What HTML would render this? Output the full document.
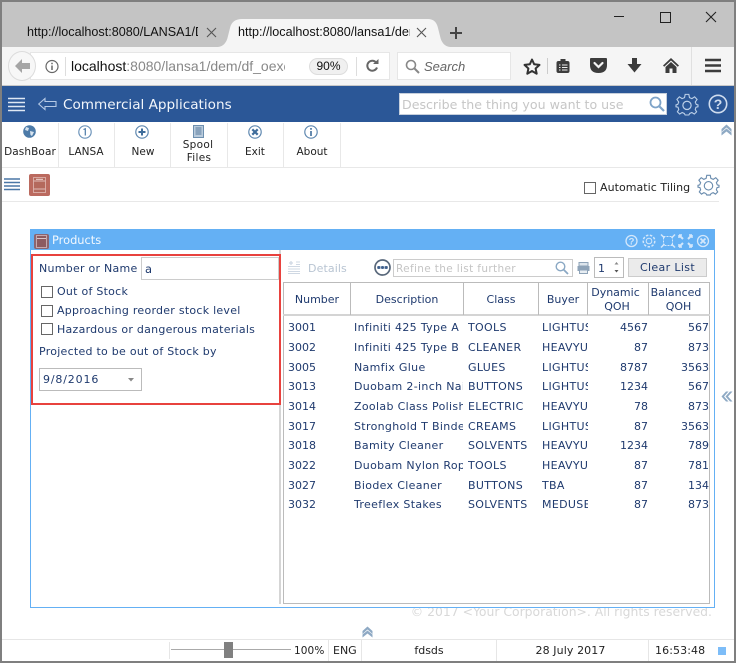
<!DOCTYPE html>
<html><head><meta charset="utf-8"><style>
*{box-sizing:border-box}
html,body{margin:0;padding:0;background:#fff}
body{width:736px;height:663px;position:relative;overflow:hidden;font-family:"DejaVu Sans","Liberation Sans",sans-serif;font-size:11px;color:#1f3a6e}
.a{position:absolute}
.t{position:absolute;white-space:nowrap;line-height:14px}
.c{text-align:center}
.r{text-align:right}
.ff{font-family:"Liberation Sans",sans-serif}
.cb{position:absolute;width:12px;height:12px;border:1px solid #666;background:#fff}
.cell{position:absolute;white-space:nowrap;overflow:hidden;line-height:14px;height:14px;margin-top:1px;letter-spacing:.33px}
.n{letter-spacing:0}
.l{letter-spacing:.26px}
svg{position:absolute;overflow:visible}
</style></head><body>
<!-- browser chrome -->
<div class="a" style="left:0;top:0;width:736px;height:47px;background:#c4c4c4"></div>
<div class="a" style="left:0;top:47px;width:736px;height:39px;background:#f5f5f5"></div>
<div class="a" style="left:0;top:85px;width:736px;height:1px;background:#c8c8c8"></div>
<svg style="left:0;top:0" width="736" height="50"><path d="M218 47Q226 46 228 36L230 28Q232 19 242 19H428Q436 19 438 28L440 36Q442 46 450 47Z" fill="#f5f5f5"/></svg>
<div class="t ff" style="left:27px;top:25px;font-size:12.6px;color:#111;width:171px;overflow:hidden">http://localhost:8080/LANSA1/D</div>
<svg style="left:206px;top:27px" width="12" height="12"><path d="M1 1L10 10M10 1L1 10" stroke="#555" stroke-width="1.1"/></svg>
<div class="t ff" style="left:238px;top:25px;font-size:12.6px;color:#111;width:172px;overflow:hidden">http://localhost:8080/lansa1/den</div>
<svg style="left:416px;top:27px" width="12" height="12"><path d="M1 1L10 10M10 1L1 10" stroke="#555" stroke-width="1.1"/></svg>
<svg style="left:449px;top:26px" width="14" height="14"><path d="M7 1V13M1 7H13" stroke="#444" stroke-width="2"/></svg>
<svg style="left:614px;top:11px" width="110" height="14"><path d="M0 5.5H10" stroke="#222"/><rect x="46.500" y="1.500" width="10" height="10" fill="none" stroke="#222"/><path d="M92 1L102 11M102 1L92 11" stroke="#222" stroke-width="1.100"/></svg>
<!-- url bar -->
<div class="a" style="left:30px;top:52px;width:360px;height:28px;background:#fff;border:1px solid #e6e6e6"></div>
<div class="a" style="left:8px;top:51px;width:28px;height:30px;border-radius:50%;background:#f7f7f7;border:1px solid #dcdcdc"></div>
<svg style="left:14px;top:58px" width="18" height="16"><path d="M8 1L1 8L8 15V11H16V5H8Z" fill="#a5a5a5"/></svg>
<svg style="left:45px;top:60px" width="14" height="14"><circle cx="7" cy="6.500" r="6" fill="none" stroke="#666" stroke-width="1.200"/><path d="M7 5.500V10M7 2.800V4.300" stroke="#666" stroke-width="1.500"/></svg>
<div class="a" style="left:65px;top:57px;width:1px;height:19px;background:#ddd"></div>
<div class="t ff" style="left:71px;top:57px;line-height:18px;font-size:14px;color:#888;width:214px;overflow:hidden"><span style="color:#111">localhost</span>:8080/lansa1/dem/df_oexe</div>
<div class="a ff" style="left:309px;top:58px;width:39px;height:17px;border-radius:9px;background:#f0f0f0;border:1px solid #ddd;text-align:center;font-size:12px;line-height:15px;color:#111">90%</div>
<div class="a" style="left:356px;top:57px;width:1px;height:19px;background:#ddd"></div>
<svg style="left:365px;top:59px" width="14" height="14"><path d="M11.500 4A5 5 0 1 0 12 8.500" fill="none" stroke="#666" stroke-width="2"/><path d="M8 5H13.500V0Z" fill="#666"/></svg>
<div class="a" style="left:397px;top:52px;width:114px;height:28px;background:#fff;border:1px solid #e6e6e6"></div>
<svg style="left:405px;top:59px" width="15" height="15"><circle cx="6" cy="6" r="4.500" fill="none" stroke="#888" stroke-width="1.600"/><path d="M9.500 9.500L14 14" stroke="#888" stroke-width="2"/></svg>
<div class="t ff" style="left:424px;top:60px;font-size:13px;font-style:italic;color:#666">Search</div>
<svg style="left:523px;top:58px" width="18" height="17"><path d="M9 1.500L11.200 6.300L16.500 6.900L12.600 10.500L13.700 15.700L9 13L4.300 15.700L5.400 10.500L1.500 6.900L6.800 6.300Z" fill="none" stroke="#333" stroke-width="2" stroke-linejoin="round"/></svg>
<div class="a" style="left:547px;top:58px;width:1px;height:16px;background:#ccc"></div>
<svg style="left:556px;top:59px" width="15" height="15"><rect x="0.500" y="2" width="13" height="12" rx="2" fill="#3c3c3c"/><rect x="4.500" y="0" width="5" height="3" fill="#3c3c3c"/><path d="M3 6H4.500M6 6H11.500M3 8.500H4.500M6 8.500H11.500M3 11H4.500M6 11H11.500" stroke="#eee"/></svg>
<svg style="left:590px;top:58px" width="17" height="15"><path d="M1 0H16Q17 0 17 1V7Q17 15 8.500 15Q0 15 0 7V1Q0 0 1 0Z" fill="#3c3c3c"/><path d="M4.500 5L8.500 9L12.500 5" fill="none" stroke="#f5f5f5" stroke-width="2.200" stroke-linecap="round"/></svg>
<svg style="left:627px;top:58px" width="15" height="15"><path d="M5 0H10V6H14.500L7.500 14.500L0.500 6H5Z" fill="#3c3c3c"/></svg>
<svg style="left:663px;top:58px" width="16" height="15"><path d="M8 0L16 7.500L14.800 8.800L8 2.500L1.200 8.800L0 7.500Z" fill="#3c3c3c"/><path d="M8 4L13.500 9V15H9.500V10.500H6.500V15H2.500V9Z" fill="#3c3c3c"/></svg>
<div class="a" style="left:691px;top:47px;width:1px;height:38px;background:#e0e0e0"></div>
<svg style="left:705px;top:58px" width="16" height="15"><path d="M0 2H16M0 7.500H16M0 13H16" stroke="#3c3c3c" stroke-width="2.600"/></svg>
<!-- app header -->
<div class="a" style="left:0;top:86px;width:736px;height:36px;background:#2b5797"></div>
<svg style="left:8px;top:97px" width="17" height="15"><path d="M0 1.500H17M0 5.500H17M0 9.500H17M0 13.500H17" stroke="#dfe8f4" stroke-width="1.500"/></svg>
<svg style="left:38px;top:97px" width="19" height="14"><path d="M0.700 7L7 1.500V4.500H18V9.500H7V12.500Z" fill="none" stroke="#b5c9e5" stroke-width="1.100"/></svg>
<div class="t" style="left:63px;top:97px;font-size:13.600px;line-height:17px;color:#f2f6fb">Commercial Applications</div>
<div class="a" style="left:399px;top:93px;width:268px;height:22px;background:#fff;border:1px solid #c6cfdc"></div>
<div class="t" style="left:402px;top:97px;font-size:12.600px;line-height:15px;color:#c6c6c6">Describe the thing you want to use</div>
<svg style="left:649px;top:96px" width="16" height="16"><circle cx="6.500" cy="6.500" r="5" fill="none" stroke="#7ea3c8" stroke-width="1.800"/><path d="M10.500 10.500L15 15" stroke="#7ea3c8" stroke-width="2.200"/></svg>
<svg style="left:676px;top:93px" width="22" height="22" viewBox="0 0 24 24"><path d="M10 1.500H14L14.700 5L17.400 6.100L20.300 4.200L23 7L21 9.900L22.100 12.500L24 13V15L21.800 15.500L21 18L22.500 20.500L20 23L17.300 21.300L15 22.300L14 24H10L9 22.300L6.700 21.300L4 23L1.500 20.500L3 18L2.200 15.500L0 15V13L1.900 12.500L3 9.900L1 7L3.700 4.200L6.600 6.100L9.300 5Z" fill="none" stroke="#bcd0e8" stroke-width="1.200"/><circle cx="12" cy="13.500" r="4.500" fill="none" stroke="#bcd0e8" stroke-width="1.300"/></svg>
<svg style="left:708px;top:94px" width="20" height="20"><circle cx="10" cy="10" r="8.700" fill="none" stroke="#cfdcee" stroke-width="1.600"/><text x="10" y="15" text-anchor="middle" font-family="Liberation Sans" font-weight="700" font-size="14" fill="#cfdcee">?</text></svg>
<!-- command toolbar -->
<div class="a" style="left:0;top:167px;width:736px;height:1px;background:#e8e8e8"></div>
<div class="a" style="left:58px;top:123px;width:1px;height:44px;background:#e8e8e8"></div>
<div class="a" style="left:114px;top:123px;width:1px;height:44px;background:#e8e8e8"></div>
<div class="a" style="left:170px;top:123px;width:1px;height:44px;background:#e8e8e8"></div>
<div class="a" style="left:227px;top:123px;width:1px;height:44px;background:#e8e8e8"></div>
<div class="a" style="left:283px;top:123px;width:1px;height:44px;background:#e8e8e8"></div>
<div class="a" style="left:340px;top:123px;width:1px;height:44px;background:#e8e8e8"></div>
<svg style="left:23px;top:125px" width="13" height="13"><circle cx="6.500" cy="6.500" r="6.300" fill="#4d7ba8"/><path d="M3 2L6 3L5 6L2 5ZM7 6L11 7L9 11L7.500 10Z" fill="#d8e4ef"/></svg>
<svg style="left:78px;top:125px" width="14" height="14"><circle cx="7" cy="7" r="6.200" fill="none" stroke="#6d94ba" stroke-width="1.200"/><path d="M5.500 4.500L7.300 3.800V10.500" fill="none" stroke="#4d7ba8" stroke-width="1.200"/></svg>
<svg style="left:135px;top:125px" width="14" height="14"><circle cx="7" cy="7" r="6.200" fill="none" stroke="#5f88b0" stroke-width="1.200"/><path d="M7 3.500V10.500M3.500 7H10.500" stroke="#3f6d9b" stroke-width="2"/></svg>
<svg style="left:193px;top:125px" width="11" height="13"><rect x="0.500" y="0.500" width="10" height="12" fill="#b9cbdc" stroke="#6d8faf"/><path d="M2.500 3H8.500M2.500 5H8.500M2.500 7H8.500M2.500 9H8.500" stroke="#56799c"/></svg>
<svg style="left:248px;top:125px" width="14" height="14"><circle cx="7" cy="7" r="6.200" fill="none" stroke="#5f88b0" stroke-width="1.200"/><path d="M4.300 4.300L9.700 9.700M9.700 4.300L4.300 9.700" stroke="#3f6d9b" stroke-width="2.200"/></svg>
<svg style="left:304px;top:125px" width="14" height="14"><circle cx="7" cy="7" r="6.200" fill="none" stroke="#5f88b0" stroke-width="1.200"/><path d="M7 6V11M7 3V4.700" stroke="#3f6d9b" stroke-width="1.600"/></svg>
<div class="t c" style="left:0;top:145px;width:60px;font-size:10.500px;color:#222;letter-spacing:.1px">DashBoar</div>
<div class="t c" style="left:58px;top:145px;width:56px;font-size:10.500px;color:#222">LANSA</div>
<div class="t c" style="left:115px;top:145px;width:56px;font-size:10.500px;color:#222">New</div>
<div class="t c" style="left:170px;top:139px;width:56px;font-size:10.500px;line-height:13px;color:#222;letter-spacing:.3px">Spool</div>
<div class="t c" style="left:171px;top:152px;width:56px;font-size:10.500px;line-height:13px;color:#222;letter-spacing:.3px">Files</div>
<div class="t c" style="left:227px;top:145px;width:56px;font-size:10.500px;color:#222">Exit</div>
<div class="t c" style="left:284px;top:145px;width:56px;font-size:10.500px;color:#222">About</div>
<svg style="left:721px;top:124px" width="11" height="12"><path d="M0.500 5L5.500 0.500L10.500 5V8L5.500 3.500L0.500 8ZM0.500 8.500L5.500 4.500L10.500 8.500V11.500L5.500 7.500L0.500 11.500Z" fill="#8ea9c4"/></svg>
<!-- second bar -->
<div class="a" style="left:0;top:201px;width:719px;height:1px;background:#e8e8e8"></div>
<svg style="left:4px;top:178px" width="17" height="13"><path d="M0 1H16M0 4.500H16M0 8H16M0 11.500H16" stroke="#4a77a6" stroke-width="1.500"/></svg>
<div class="a" style="left:29px;top:174px;width:21px;height:22px;background:#bb6a5f;border-radius:2px"></div>
<svg style="left:33px;top:177px" width="13" height="16"><rect x="0.500" y="0.500" width="12" height="15" fill="#b4695d" stroke="#d9aaa3"/><path d="M0.500 4H12.500M0.500 12H12.500" stroke="#e0bcb6"/><path d="M3 2.300H10" stroke="#f0d8d4"/></svg>
<div class="cb" style="left:584px;top:182px"></div>
<div class="t" style="left:600px;top:181px;font-size:11px;color:#222;letter-spacing:.05px">Automatic Tiling</div>
<svg style="left:698px;top:174px" width="21" height="21" viewBox="0 0 24 24"><path d="M10 1.500H14L14.700 5L17.400 6.100L20.300 4.200L23 7L21 9.900L22.100 12.500L24 13V15L21.800 15.500L21 18L22.500 20.500L20 23L17.300 21.300L15 22.300L14 24H10L9 22.300L6.700 21.300L4 23L1.500 20.500L3 18L2.200 15.500L0 15V13L1.900 12.500L3 9.900L1 7L3.700 4.200L6.600 6.100L9.300 5Z" fill="none" stroke="#6a8cae" stroke-width="1.300"/><circle cx="12" cy="13.500" r="4.800" fill="none" stroke="#6a8cae" stroke-width="1.300"/></svg>
<!-- footer text sits behind the products window, which clips its top edge -->
<div class="t r" style="left:380px;top:604px;width:332px;font-size:12.400px;line-height:16px;color:#d8d8d8">© 2017 &lt;Your Corporation&gt;. All rights reserved.</div>
<!-- products window -->
<div class="a" style="left:30px;top:229px;width:685px;height:379px;background:#fff;border:1px solid #64b0f4"></div>
<div class="a" style="left:30px;top:229px;width:685px;height:21px;background:#64b0f4"></div>
<div class="a" style="left:34px;top:234px;width:15px;height:15px;background:#8c6570;border-radius:2px"></div>
<svg style="left:36px;top:235px" width="11" height="13"><rect x="0.500" y="0.500" width="10" height="12" fill="#8c5a60" stroke="#c5a8ae"/><path d="M1 3.500H10" stroke="#d8c6ca"/></svg>
<div class="t" style="left:52px;top:233px;font-size:11.400px;color:#f2f8fe">Products</div>
<svg style="left:625px;top:234px" width="85" height="14" fill="none" stroke="#d3e7fb"><circle cx="6.500" cy="7" r="5.500" stroke-width="1.300"/><text x="6.500" y="10.500" text-anchor="middle" font-family="Liberation Sans" font-weight="700" font-size="9.500" fill="#d3e7fb" stroke="none">?</text><circle cx="24" cy="7" r="2.800"/><circle cx="24" cy="7" r="5.800" stroke-dasharray="2.500 1.500" stroke-width="1.500"/><rect x="38.500" y="2.500" width="9" height="9" stroke-dasharray="2 1"/><path d="M36 0.500L39.500 4M50 0.500L46.500 4M36 13.500L39.500 10M50 13.500L46.500 10" stroke-width="1.500"/><path d="M54 1L58 5M67 1L63 5M54 13L58 9M67 13L63 9" stroke-width="2"/><path d="M54 1H57M54 1V4M67 1H64M67 1V4M54 13H57M54 13V10M67 13H64M67 13V10" stroke-width="1.500"/><circle cx="78" cy="7" r="5.500" stroke-width="1.300"/><path d="M75.500 4.500L80.500 9.500M80.500 4.500L75.500 9.500" stroke-width="1.800"/></svg>
<!-- left pane -->
<div class="a" style="left:279px;top:250px;width:2px;height:354px;background:#d5d5d5"></div>
<div class="a" style="left:31px;top:254px;width:250px;height:151px;border:2px solid #e8423e"></div>
<div class="t l" style="left:39px;top:262px;color:#1f3a6e">Number or Name</div>
<div class="a" style="left:141px;top:257px;width:138px;height:23px;border:1px solid #ccc;background:#fff"></div>
<div class="t" style="left:145px;top:262px;color:#1f3a6e;font-size:11.500px">a</div>
<div class="cb" style="left:41px;top:286px"></div>
<div class="t l" style="left:57px;top:285px">Out of Stock</div>
<div class="cb" style="left:41px;top:305px"></div>
<div class="t l" style="left:57px;top:304px">Approaching reorder stock level</div>
<div class="cb" style="left:41px;top:323px"></div>
<div class="t l" style="left:57px;top:323px">Hazardous or dangerous materials</div>
<div class="t l" style="left:39px;top:345px">Projected to be out of Stock by</div>
<div class="a" style="left:39px;top:368px;width:103px;height:23px;border:1px solid #bbb;background:#fff"></div>
<div class="t" style="left:43px;top:373px;color:#1f3a6e;letter-spacing:.85px">9/8/2016</div>
<svg style="left:128px;top:378px" width="6" height="4"><path d="M0 0H6L3 3.500Z" fill="#888"/></svg>
<!-- right toolbar -->
<svg style="left:288px;top:261px" width="13" height="13" stroke="#cfd8e3"><path d="M0 5.500H12M0 8H12M0 10.500H12M0 12.500H12" stroke-width="1"/><path d="M3 0V4M1 2H5" stroke-width="1.300"/><path d="M8 1H12M8 3.500H12"/></svg>
<div class="t" style="left:308px;top:262px;color:#b8c4d2;font-size:11px;letter-spacing:.1px">Details</div>
<svg style="left:374px;top:259px" width="18" height="18"><circle cx="8.500" cy="8.500" r="7.500" fill="#fff" stroke="#58677a" stroke-width="1.700"/><path d="M3 7H14V10H3Z" fill="#c9d2de"/><circle cx="4.800" cy="8.500" r="1.500" fill="#3e5f8c"/><circle cx="8.500" cy="8.500" r="1.500" fill="#3e5f8c"/><circle cx="12.200" cy="8.500" r="1.500" fill="#3e5f8c"/></svg>
<div class="a" style="left:393px;top:259px;width:180px;height:18px;border:1px solid #ccc;background:#fff"></div>
<div class="t" style="left:396px;top:262px;font-size:10.500px;color:#c4c4c4;letter-spacing:.35px">Refine the list further</div>
<svg style="left:555px;top:261px" width="14" height="14"><circle cx="5.500" cy="5.500" r="4.300" fill="none" stroke="#8aa8c4" stroke-width="1.400"/><path d="M8.500 8.500L13 13" stroke="#8aa8c4" stroke-width="1.800"/></svg>
<svg style="left:577px;top:262px" width="13" height="12"><rect x="2" y="0.500" width="9" height="3.500" fill="#dde5ec" stroke="#8ea3b8"/><rect x="0.500" y="4" width="12" height="5" fill="#8ea3b8"/><rect x="2.500" y="8" width="8" height="3.500" fill="#e8eef3" stroke="#8ea3b8"/></svg>
<div class="a" style="left:594px;top:257px;width:30px;height:21px;border:1px solid #bbb;background:#fff"></div>
<div class="t" style="left:598px;top:262px;color:#1f3a6e;font-size:11px">1</div>
<svg style="left:613px;top:261px" width="7" height="13"><path d="M1.500 3.500L3.500 1L5.500 3.500Z" fill="#888"/><path d="M1.500 9L3.500 11.500L5.500 9Z" fill="#555"/></svg>
<div class="a c" style="left:628px;top:258px;width:79px;height:19px;background:#ebebeb;border:1px solid #ccc;line-height:17px;font-size:11px;color:#1f3a6e;text-align:center;letter-spacing:.35px">Clear List</div>
<!-- table -->
<div class="a" style="left:283px;top:282px;width:427px;height:322px;border:1px solid #bbb;background:#fff"></div>
<div class="a" style="left:283px;top:314px;width:427px;height:2px;background:#d4d4d4"></div>
<div class="a" style="left:350px;top:282px;width:1px;height:33px;background:#bbb"></div>
<div class="a" style="left:463px;top:282px;width:1px;height:33px;background:#bbb"></div>
<div class="a" style="left:538px;top:282px;width:1px;height:33px;background:#bbb"></div>
<div class="a" style="left:587px;top:282px;width:1px;height:33px;background:#bbb"></div>
<div class="a" style="left:648px;top:282px;width:1px;height:33px;background:#bbb"></div>
<div class="t c" style="left:284px;top:293px;width:66px">Number</div>
<div class="t c" style="left:351px;top:293px;width:112px">Description</div>
<div class="t c" style="left:464px;top:293px;width:74px">Class</div>
<div class="t c" style="left:539px;top:293px;width:48px">Buyer</div>
<div class="t c" style="left:588px;top:286px;width:55px">Dynamic</div>
<div class="t c" style="left:588px;top:300px;width:58px">QOH</div>
<div class="t c" style="left:649px;top:286px;width:54px">Balanced</div>
<div class="t c" style="left:649px;top:300px;width:59px">QOH</div>
<!-- rows -->
<div class="cell n" style="left:288px;top:320px">3001</div><div class="cell" style="left:354px;top:320px;width:109px">Infiniti 425 Type A</div><div class="cell" style="left:468px;top:320px;width:68px">TOOLS</div><div class="cell" style="left:542px;top:320px;width:46px">LIGHTUSER</div><div class="cell r n" style="left:590px;top:320px;width:58px">4567</div><div class="cell r n" style="left:650px;top:320px;width:59px">567</div>
<div class="cell n" style="left:288px;top:340px">3002</div><div class="cell" style="left:354px;top:340px;width:109px">Infiniti 425 Type B</div><div class="cell" style="left:468px;top:340px;width:68px">CLEANER</div><div class="cell" style="left:542px;top:340px;width:46px">HEAVYUSER</div><div class="cell r n" style="left:590px;top:340px;width:58px">87</div><div class="cell r n" style="left:650px;top:340px;width:59px">873</div>
<div class="cell n" style="left:288px;top:360px">3005</div><div class="cell" style="left:354px;top:360px;width:109px">Namfix Glue</div><div class="cell" style="left:468px;top:360px;width:68px">GLUES</div><div class="cell" style="left:542px;top:360px;width:46px">LIGHTUSER</div><div class="cell r n" style="left:590px;top:360px;width:58px">8787</div><div class="cell r n" style="left:650px;top:360px;width:59px">3563</div>
<div class="cell n" style="left:288px;top:379px">3013</div><div class="cell" style="left:354px;top:379px;width:109px">Duobam 2-inch Nails</div><div class="cell" style="left:468px;top:379px;width:68px">BUTTONS</div><div class="cell" style="left:542px;top:379px;width:46px">LIGHTUSER</div><div class="cell r n" style="left:590px;top:379px;width:58px">1234</div><div class="cell r n" style="left:650px;top:379px;width:59px">567</div>
<div class="cell n" style="left:288px;top:399px">3014</div><div class="cell" style="left:354px;top:399px;width:109px">Zoolab Class Polisher</div><div class="cell" style="left:468px;top:399px;width:68px">ELECTRIC</div><div class="cell" style="left:542px;top:399px;width:46px">HEAVYUSER</div><div class="cell r n" style="left:590px;top:399px;width:58px">78</div><div class="cell r n" style="left:650px;top:399px;width:59px">873</div>
<div class="cell n" style="left:288px;top:419px">3017</div><div class="cell" style="left:354px;top:419px;width:109px">Stronghold T Binder</div><div class="cell" style="left:468px;top:419px;width:68px">CREAMS</div><div class="cell" style="left:542px;top:419px;width:46px">LIGHTUSER</div><div class="cell r n" style="left:590px;top:419px;width:58px">87</div><div class="cell r n" style="left:650px;top:419px;width:59px">3563</div>
<div class="cell n" style="left:288px;top:438px">3018</div><div class="cell" style="left:354px;top:438px;width:109px">Bamity Cleaner</div><div class="cell" style="left:468px;top:438px;width:68px">SOLVENTS</div><div class="cell" style="left:542px;top:438px;width:46px">HEAVYUSER</div><div class="cell r n" style="left:590px;top:438px;width:58px">1234</div><div class="cell r n" style="left:650px;top:438px;width:59px">789</div>
<div class="cell n" style="left:288px;top:458px">3022</div><div class="cell" style="left:354px;top:458px;width:109px">Duobam Nylon Rope</div><div class="cell" style="left:468px;top:458px;width:68px">TOOLS</div><div class="cell" style="left:542px;top:458px;width:46px">HEAVYUSER</div><div class="cell r n" style="left:590px;top:458px;width:58px">87</div><div class="cell r n" style="left:650px;top:458px;width:59px">781</div>
<div class="cell n" style="left:288px;top:478px">3027</div><div class="cell" style="left:354px;top:478px;width:109px">Biodex Cleaner</div><div class="cell" style="left:468px;top:478px;width:68px">BUTTONS</div><div class="cell" style="left:542px;top:478px;width:46px">TBA</div><div class="cell r n" style="left:590px;top:478px;width:58px">87</div><div class="cell r n" style="left:650px;top:478px;width:59px">134</div>
<div class="cell n" style="left:288px;top:497px">3032</div><div class="cell" style="left:354px;top:497px;width:109px">Treeflex Stakes</div><div class="cell" style="left:468px;top:497px;width:68px">SOLVENTS</div><div class="cell" style="left:542px;top:497px;width:46px">MEDUSER</div><div class="cell r n" style="left:590px;top:497px;width:58px">87</div><div class="cell r n" style="left:650px;top:497px;width:59px">873</div>
<!-- side collapse -->
<svg style="left:721px;top:391px" width="12" height="11"><path d="M5 0.500L0.500 5.500L5 10.500H7.500L3 5.500L7.500 0.500ZM9 0.500L4.500 5.500L9 10.500H11.500L7 5.500L11.500 0.500Z" fill="#8ea9c4"/></svg>
<!-- status bar -->
<svg style="left:362px;top:626px" width="11" height="12"><path d="M0.500 5L5.500 0.500L10.500 5V8L5.500 3.500L0.500 8ZM0.500 8.500L5.500 4.500L10.500 8.500V11.500L5.500 7.500L0.500 11.500Z" fill="#8ea9c4"/></svg>
<div class="a" style="left:2px;top:639px;width:732px;height:1px;background:#e6e6e6"></div>
<div class="a" style="left:169px;top:642px;width:1px;height:17px;background:#e6e6e6"></div>
<div class="a" style="left:328px;top:640px;width:1px;height:21px;background:#e6e6e6"></div>
<div class="a" style="left:361px;top:640px;width:1px;height:21px;background:#e6e6e6"></div>
<div class="a" style="left:496px;top:640px;width:1px;height:21px;background:#e6e6e6"></div>
<div class="a" style="left:648px;top:640px;width:1px;height:21px;background:#e6e6e6"></div>
<div class="a" style="left:171px;top:649px;width:120px;height:1px;background:#aaa"></div>
<div class="a" style="left:224px;top:642px;width:9px;height:16px;background:#808080"></div>
<div class="t" style="left:294px;top:644px;font-size:10.500px;color:#222;letter-spacing:.1px">100%</div>
<div class="t" style="left:333px;top:644px;color:#222">ENG</div>
<div class="t c" style="left:362px;top:644px;width:134px;color:#222">fdsds</div>
<div class="t c" style="left:497px;top:644px;width:147px;color:#222;letter-spacing:.1px">28 July 2017</div>
<div class="t" style="left:655px;top:644px;color:#222;letter-spacing:.1px">16:53:48</div>
<div class="a" style="left:718px;top:647px;width:8px;height:8px;background:#7dbdf8"></div>
<!-- window border -->
<div class="a" style="left:0;top:0;width:736px;height:663px;border:2px solid #7f7f7f"></div>
</body></html>
